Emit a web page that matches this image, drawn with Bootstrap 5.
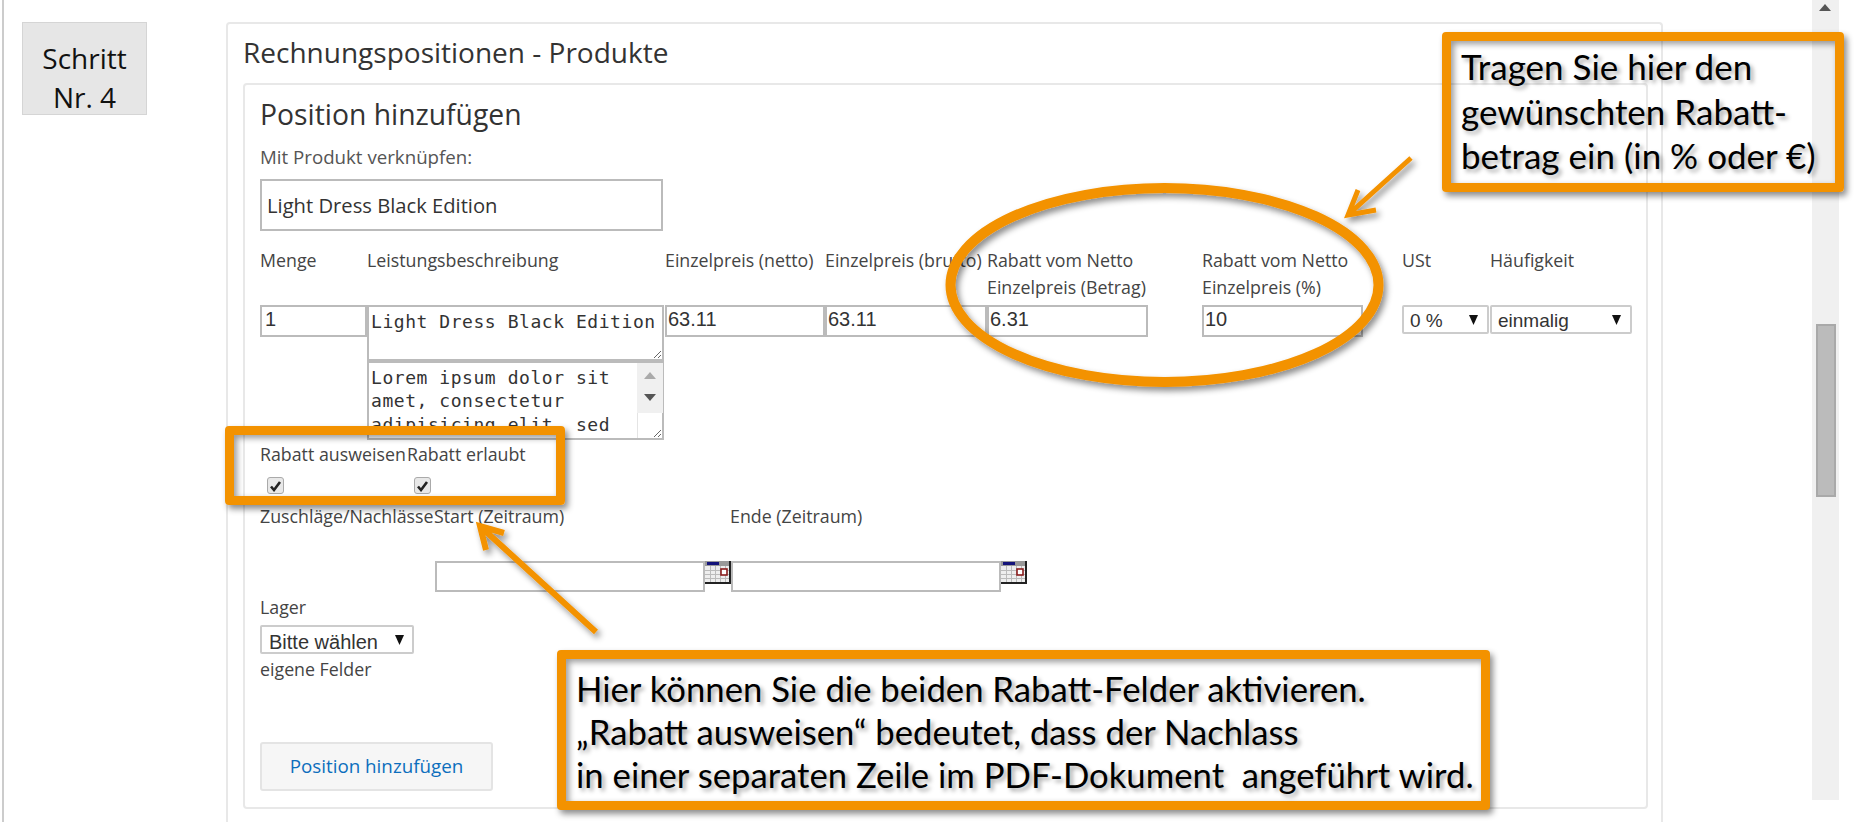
<!DOCTYPE html>
<html lang="de">
<head>
  <meta charset="UTF-8">
  <title>Rechnungspositionen</title>
  <link href="https://cdn.jsdelivr.net/npm/bootstrap@5.3.1/dist/css/bootstrap.min.css" rel="stylesheet">
  <style>
    html, body { height: 100%; overflow: hidden; background: #fff; }
    body { font-family: "Open Sans", sans-serif; color: #333; }
    .stage { width: 1855px; height: 833px; }
    .page-frame { height: 822px; padding-top: 22px; border-left: 2px solid #ccc; margin-left: 2px; }

    .step-box { width: 125px; height: 93px; margin-left: 18px; background: #e6e6e6; border: 1px solid #d5d5d5;
      font-size: 28px; line-height: 39px; color: #111; text-align: center; padding-top: 16px; }

    .outer-panel { width: 1437px; margin-left: 79px; height: 800px; border: 2px solid #e8e8e8; border-bottom: 0;
      border-radius: 4px 4px 0 0; padding: 0 13px 0 15px; }
    .outer-title { height: 59px; font-size: 28px; line-height: 56px; color: #333; margin: 0; font-weight: 400; white-space: nowrap; }
    .inner-panel { height: 726px; border: 2px solid #e8e8e8; border-radius: 4px; padding: 9px 15px 0; }
    .inner-title { height: 40px; font-size: 28.3px; line-height: 40px; margin: 0; font-weight: 400; color: #333; }
    .field-hint { height: 24px; margin-top: 11px; font-size: 18.7px; line-height: 24px; color: #555; }
    .product-input.form-control { width: 403px; height: 52px; margin-top: 10px; padding: 0 5px; font-size: 20.2px; color: #333; }

    .form-control { border: 2px solid #bbb; border-radius: 0; background-color: #fff; }
    .pos-grid { display: grid; margin-top: 16px;
      grid-template-columns: 107px 298px 160px 162px 215px 200px 88px 142px; }
    .col-label { height: 58px; font-size: 17.8px; line-height: 27px; color: #444; white-space: nowrap; }
    .num-input.form-control { width: 160px; height: 32px; padding: 0 1px 4px; font-family: "Liberation Sans", sans-serif; font-size: 20px; color: #333; }
    .num-input.qty { width: 107px; padding-left: 3px; }
    .num-input.price { width: 162px; }
    .num-input.discount { width: 161px; }
    .mono-area.form-control { width: 297px; padding: 3px 2px 2px 2px; font-family: "DejaVu Sans Mono", monospace; font-size: 18px;
      line-height: 23.3px; letter-spacing: .55px; color: #333; min-height: 0; }
    .desc-title { height: 56px; }
    .desc-text.form-control { height: 79px; overflow: hidden; padding-right: 30px; }
    /* Scrollleiste des Textfelds, im Screenshot sichtbar */
    .desc-bar { top: 2px; right: 2px; width: 26px; height: 50px; background: #f0f0f0; padding-top: 9px; }
    .desc-corner { top: 52px; right: 2px; width: 26px; height: 25px; border-left: 1px solid #e4e4e4; }
    .tri-up { width: 0; height: 0; margin: 0 auto 15px; border: 6px solid transparent; border-top: 0; border-bottom: 7px solid #aaa; }
    .tri-down { width: 0; height: 0; margin: 0 auto; border: 6px solid transparent; border-bottom: 0; border-top: 7px solid #555; }

    .drop-box { appearance: none; -webkit-appearance: none; height: 29px; border: 2px solid #ccc; border-radius: 2px; background: #fff no-repeat;
      background-image: url("data:image/svg+xml,%3Csvg xmlns='http://www.w3.org/2000/svg' width='9' height='10'%3E%3Cpath d='M0 0h9L4.500 10z' fill='%23111'/%3E%3C/svg%3E");
      font-family: "Liberation Sans", sans-serif; font-size: 19px; color: #333; padding: 0 6px; }
    .vat-box { width: 87px; background-position: right 9px top 8px; }
    .freq-box { width: 142px; background-position: right 9px top 8px; }
    .stock-box { width: 154px; background-position: right 8px top 8px; font-size: 20px; padding: 0 7px; margin-top: 6px; }

    .flag-row { margin-top: 2px; }
    .flag-cell { font-size: 17.8px; line-height: 24px; color: #444; white-space: nowrap; }
    .flag-w { width: 147px; }
    .flag-check { appearance: none; -webkit-appearance: none; display: block; width: 17px; height: 17px; margin: 11px 0 0 7px;
      background: #e8e8e8 no-repeat center; border: 1px solid #aaa; border-radius: 3px;
      background-image: url("data:image/svg+xml,%3Csvg xmlns='http://www.w3.org/2000/svg' width='13' height='12'%3E%3Cpath d='M2 6.500l3 3.500 6-8' fill='none' stroke='%23222' stroke-width='2.600'/%3E%3C/svg%3E"); }

    .period-row { height: 24px; margin-top: 10px; font-size: 17.8px; line-height: 24px; color: #444; white-space: nowrap; }
    .period-a { width: 174px; }
    .period-b { width: 296px; }
    .date-row { margin: 33px 0 0 175px; height: 31px; }
    .date-input.form-control { width: 270px; height: 31px; padding: 0; }
    .cal-icon { width: 26px; height: 23px; margin-right: 0; flex: none; }
    .lager-label { height: 24px; margin-top: 3px; font-size: 17.8px; line-height: 24px; color: #444; }
    .own-fields { height: 24px; margin-top: 3px; font-size: 17.8px; line-height: 24px; color: #444; }
    .add-btn.btn { width: 233px; height: 49px; margin-top: 61px; padding: 0; background: #f6f6f6; border: 2px solid #e4e4e4; border-radius: 3px;
      color: #0c6ebd; font-size: 18.8px; font-weight: 500; }

    .bar-track { width: 27px; height: 800px; margin: -22px 0 0 149px; background: #f0f0f0; padding-top: 324px; flex: none; }
    .bar-arrow { top: 4px; left: 7px; border: 6px solid transparent; border-top: 0; border-bottom: 7px solid #555; width: 0; height: 0; }
    .bar-thumb { width: 20px; height: 173px; margin-left: 4px; background: #bbb; border: 2px solid #a9a9a9; }

    .marks { top: 0; left: 0; width: 1855px; height: 833px; pointer-events: none; }
    .note-box { border: 9px solid #f39200; border-radius: 4px; color: #000; font-family: "Lato", sans-serif; white-space: nowrap;
      box-shadow: 3px 4px 6px rgba(0,0,0,.45), inset 3px 3px 6px rgba(0,0,0,.4); pointer-events: none; }
    .note-rabatt { left: 1442px; top: 32px; width: 402px; height: 160px; padding: 3px 0 0 10px; font-size: 35px; line-height: 44.500px; text-shadow: 3px 3px 4px rgba(0,0,0,.35); }
    .note-flags { left: 225px; top: 426px; width: 340px; height: 79px; }
    .note-hint { left: 557px; top: 650px; width: 933px; height: 160px; padding: 8px 0 0 10px; background: #fff; font-size: 34.7px; line-height: 43px; text-shadow: 3px 3px 4px rgba(0,0,0,.35); }
  </style>
</head>
<body>
  <div class="stage position-relative">
    <div class="page-frame d-flex align-items-start">
      <div class="step-box flex-shrink-0">Schritt<br>Nr. 4</div>

      <div class="outer-panel flex-shrink-0">
        <h2 class="outer-title">Rechnungspositionen - Produkte</h2>

        <div class="inner-panel">
          <h3 class="inner-title">Position hinzufügen</h3>
          <div class="field-hint">Mit Produkt verknüpfen:</div>
          <input class="form-control product-input" type="text" value="Light Dress Black Edition">

          <!-- Kopfzeile und Eingaben der Position -->
          <div class="pos-grid">
            <div class="col-label">Menge</div>
            <div class="col-label">Leistungsbeschreibung</div>
            <div class="col-label">Einzelpreis (netto)</div>
            <div class="col-label">Einzelpreis (brutto)</div>
            <div class="col-label">Rabatt vom Netto<br>Einzelpreis (Betrag)</div>
            <div class="col-label">Rabatt vom Netto<br>Einzelpreis (%)</div>
            <div class="col-label">USt</div>
            <div class="col-label">Häufigkeit</div>

            <div><input class="form-control num-input qty" type="text" value="1"></div>
            <div class="d-flex flex-column">
              <textarea class="form-control mono-area desc-title">Light Dress Black Edition</textarea>
              <div class="position-relative">
                <textarea class="form-control mono-area desc-text">Lorem ipsum dolor sit amet, consectetur adipisicing elit, sed do eiusmod tempor incididunt ut labore</textarea>
                <div class="desc-bar position-absolute"><div class="tri-up"></div><div class="tri-down"></div></div>
                <div class="desc-corner position-absolute"></div>
              </div>
            </div>
            <div><input class="form-control num-input" type="text" value="63.11"></div>
            <div><input class="form-control num-input price" type="text" value="63.11"></div>
            <div><input class="form-control num-input discount" type="text" value="6.31"></div>
            <div><input class="form-control num-input discount" type="text" value="10"></div>
            <div><select class="drop-box vat-box"><option>0 %</option></select></div>
            <div><select class="drop-box freq-box"><option>einmalig</option></select></div>
          </div>

          <div class="flag-row d-flex">
            <div class="flag-cell flag-w">Rabatt ausweisen<input class="flag-check" type="checkbox" checked></div>
            <div class="flag-cell">Rabatt erlaubt<input class="flag-check" type="checkbox" checked></div>
          </div>

          <div class="period-row d-flex">
            <div class="period-a">Zuschläge/Nachlässe</div>
            <div class="period-b">Start (Zeitraum)</div>
            <div>Ende (Zeitraum)</div>
          </div>

          <div class="date-row d-flex">
            <input class="form-control date-input" type="text">
            <svg class="cal-icon" viewBox="0 0 26 23">
              <rect width="26" height="23" fill="#eee"/>
              <rect y="0" width="26" height="5" fill="#999"/>
              <rect x="2" y="1" width="12" height="3" fill="#14147a"/>
              <path d="M0 9.500h25M0 13.500h25M0 17.500h25M5.500 5v17M10.500 5v17M15.500 5v17M20.500 5v17" stroke="#bbb" fill="none"/>
              <rect x="16" y="8" width="6" height="6" fill="#fff" stroke="#8a1c1c" stroke-width="1.600"/>
              <path d="M25 0v22H0" stroke="#222" stroke-width="2" fill="none"/>
            </svg>
            <input class="form-control date-input" type="text">
            <svg class="cal-icon" viewBox="0 0 26 23">
              <rect width="26" height="23" fill="#eee"/>
              <rect y="0" width="26" height="5" fill="#999"/>
              <rect x="2" y="1" width="12" height="3" fill="#14147a"/>
              <path d="M0 9.500h25M0 13.500h25M0 17.500h25M5.500 5v17M10.500 5v17M15.500 5v17M20.500 5v17" stroke="#bbb" fill="none"/>
              <rect x="16" y="8" width="6" height="6" fill="#fff" stroke="#8a1c1c" stroke-width="1.600"/>
              <path d="M25 0v22H0" stroke="#222" stroke-width="2" fill="none"/>
            </svg>
          </div>

          <div class="lager-label">Lager</div>
          <select class="drop-box stock-box d-block"><option>Bitte wählen</option></select>
          <div class="own-fields">eigene Felder</div>
          <button class="btn add-btn d-block" type="button">Position hinzufügen</button>
        </div>
      </div>

      <div class="bar-track position-relative">
        <div class="bar-arrow position-absolute"></div>
        <div class="bar-thumb"></div>
      </div>
    </div>

    <!-- Markierungen über dem Formular -->
    <svg class="marks position-absolute" viewBox="0 0 1855 833">
      <defs>
        <filter id="soft" x="-10%" y="-10%" width="125%" height="125%">
          <feDropShadow dx="3" dy="4" stdDeviation="3" flood-color="#000" flood-opacity=".45"/>
        </filter>
      </defs>
      <g fill="none" stroke="#f39200" filter="url(#soft)">
        <ellipse cx="1164.500" cy="285" rx="214" ry="97" stroke-width="10"/>
        <path d="M1411 158L1349 214M1358 190L1348 215L1376 210" stroke-width="5"/>
        <path d="M596 632L482 528M486 550L480 526L504 533" stroke-width="6"/>
      </g>
    </svg>

    <div class="note-box note-rabatt position-absolute">Tragen Sie hier den<br>gewünschten Rabatt-<br>betrag ein (in % oder €)</div>
    <div class="note-box note-flags position-absolute"></div>
    <div class="note-box note-hint position-absolute">Hier können Sie die beiden Rabatt-Felder aktivieren.<br>„Rabatt ausweisen“ bedeutet, dass der Nachlass<br>in einer separaten Zeile im PDF-Dokument&nbsp; angeführt wird.</div>
  </div>

  <script src="https://cdn.jsdelivr.net/npm/bootstrap@5.3.1/dist/js/bootstrap.bundle.min.js"></script>
</body>
</html>
